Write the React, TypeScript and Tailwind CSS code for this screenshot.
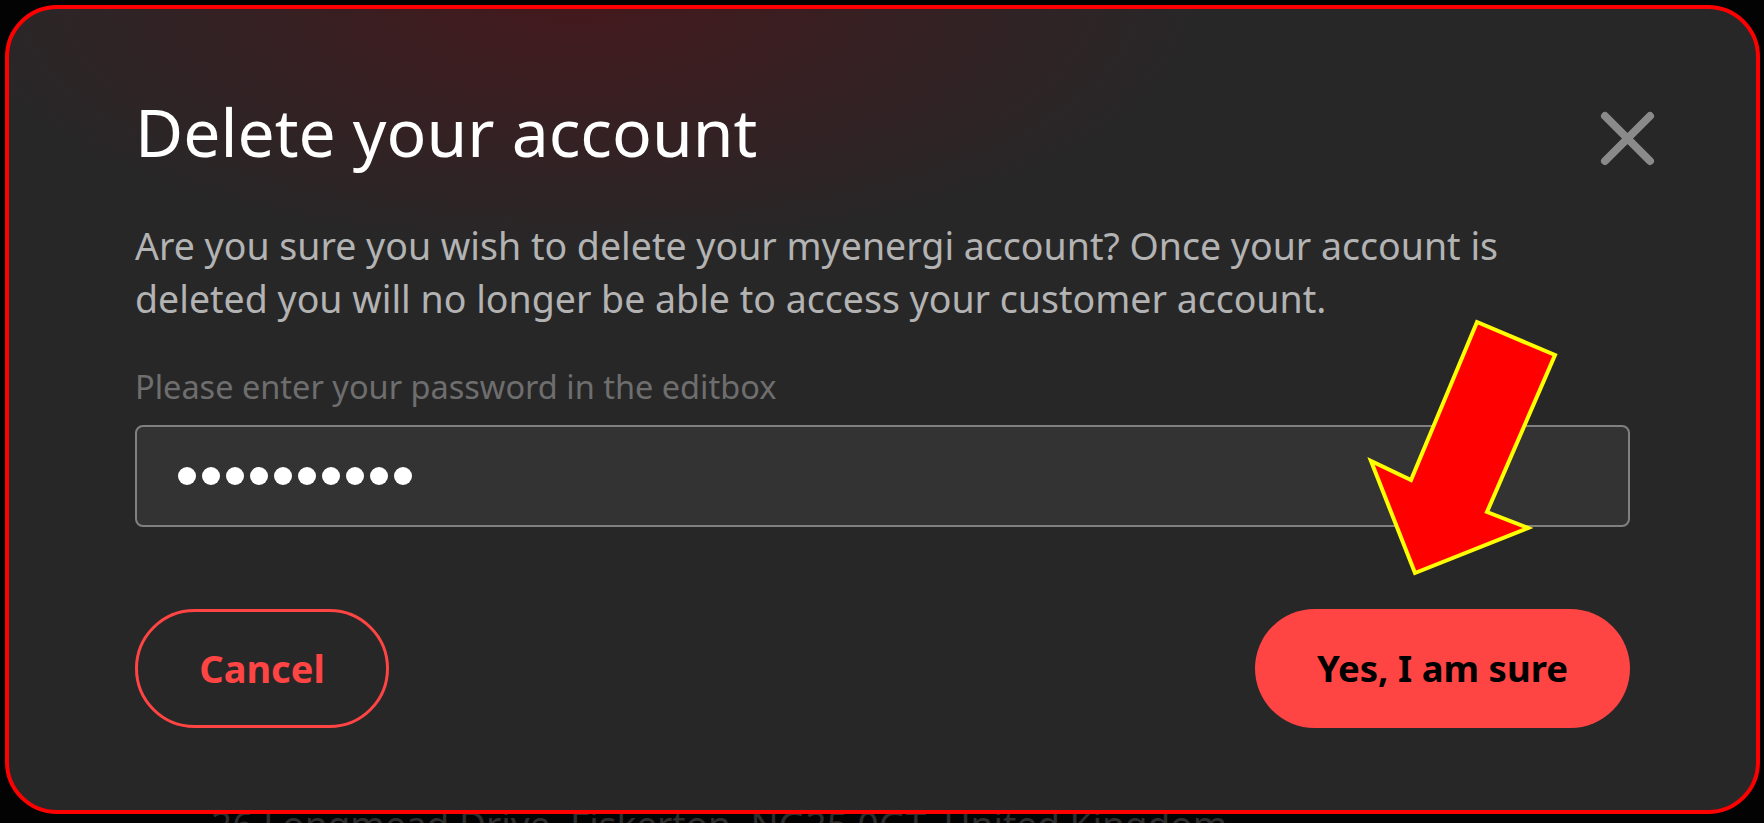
import React from 'react';

const font = { fontFamily: '"Noto Sans", Roboto, sans-serif' };

const CloseIcon = () => (
  <svg width="55" height="55" viewBox="0 0 55 55" fill="none">
    <path d="M5 5 L50 50 M50 5 L5 50" stroke="#8a8a8a" strokeWidth="8" strokeLinecap="round" />
  </svg>
);

// annotation arrow drawn over the screenshot
const Arrow = () => (
  <svg
    className="absolute top-0 left-0 z-20 pointer-events-none"
    width="1764"
    height="823"
    viewBox="0 0 1764 823"
  >
    <polygon
      points="1477,322 1555,355 1487,512 1528,528 1415,573 1371,461 1411,480"
      fill="#ff0000"
      stroke="#ffff00"
      strokeWidth="4"
      strokeLinejoin="miter"
    />
  </svg>
);

export default function App() {
  return (
    <div className="relative w-[1764px] h-[823px] overflow-hidden bg-[#030303]" style={font}>
      <div className="relative z-10 ml-[5px] mt-[5px] w-[1755px] rounded-[52px] border-4 border-[#ff0000] bg-[#282728] bg-[radial-gradient(ellipse_620px_250px_at_570px_-10px,#44191d,transparent)] px-[126px] pt-[86px] pb-[82px]">
        {/* Header */}
        <div className="flex items-start justify-between">
          <h1 className="text-[66px] leading-[72px] font-normal text-white">Delete your account</h1>
          <button className="mt-[16px] mr-[-25px]">
            <CloseIcon />
          </button>
        </div>

        <p className="mt-[52px] text-[37.5px] leading-[53px] text-[#b3b3b3]">
          Are you sure you wish to delete your myenergi account? Once your account is
          <br />
          deleted you will no longer be able to access your customer account.
        </p>

        <label className="mt-[42px] block text-[32.5px] leading-[40px] text-[#6e6e6e]">
          Please enter your password in the editbox
        </label>

        <div className="mt-[18px] flex h-[102px] items-center gap-[6px] rounded-[8px] border-2 border-[#808080] bg-[#333333] pl-[41px]">
          {Array.from({ length: 10 }).map((_, i) => (
            <span key={i} className="h-[18px] w-[18px] rounded-full bg-white" />
          ))}
        </div>

        {/* Actions */}
        <div className="mt-[82px] flex items-center justify-between">
          <button className="flex h-[119px] w-[254px] items-center justify-center rounded-full border-[3px] border-[#ff4444] text-[38px] font-bold text-[#ff4444]">
            Cancel
          </button>
          <button className="flex h-[119px] w-[375px] items-center justify-center rounded-full bg-[#ff4444] text-[36.5px] font-bold text-black">
            Yes, I am sure
          </button>
        </div>
      </div>

      <p className="-mt-[12px] pl-[211px] text-[37px] leading-[44px] text-[#2e2e2e]">
        26 Longmead Drive, Fiskerton, NG25 0GT, United Kingdom
      </p>

      <Arrow />
    </div>
  );
}
